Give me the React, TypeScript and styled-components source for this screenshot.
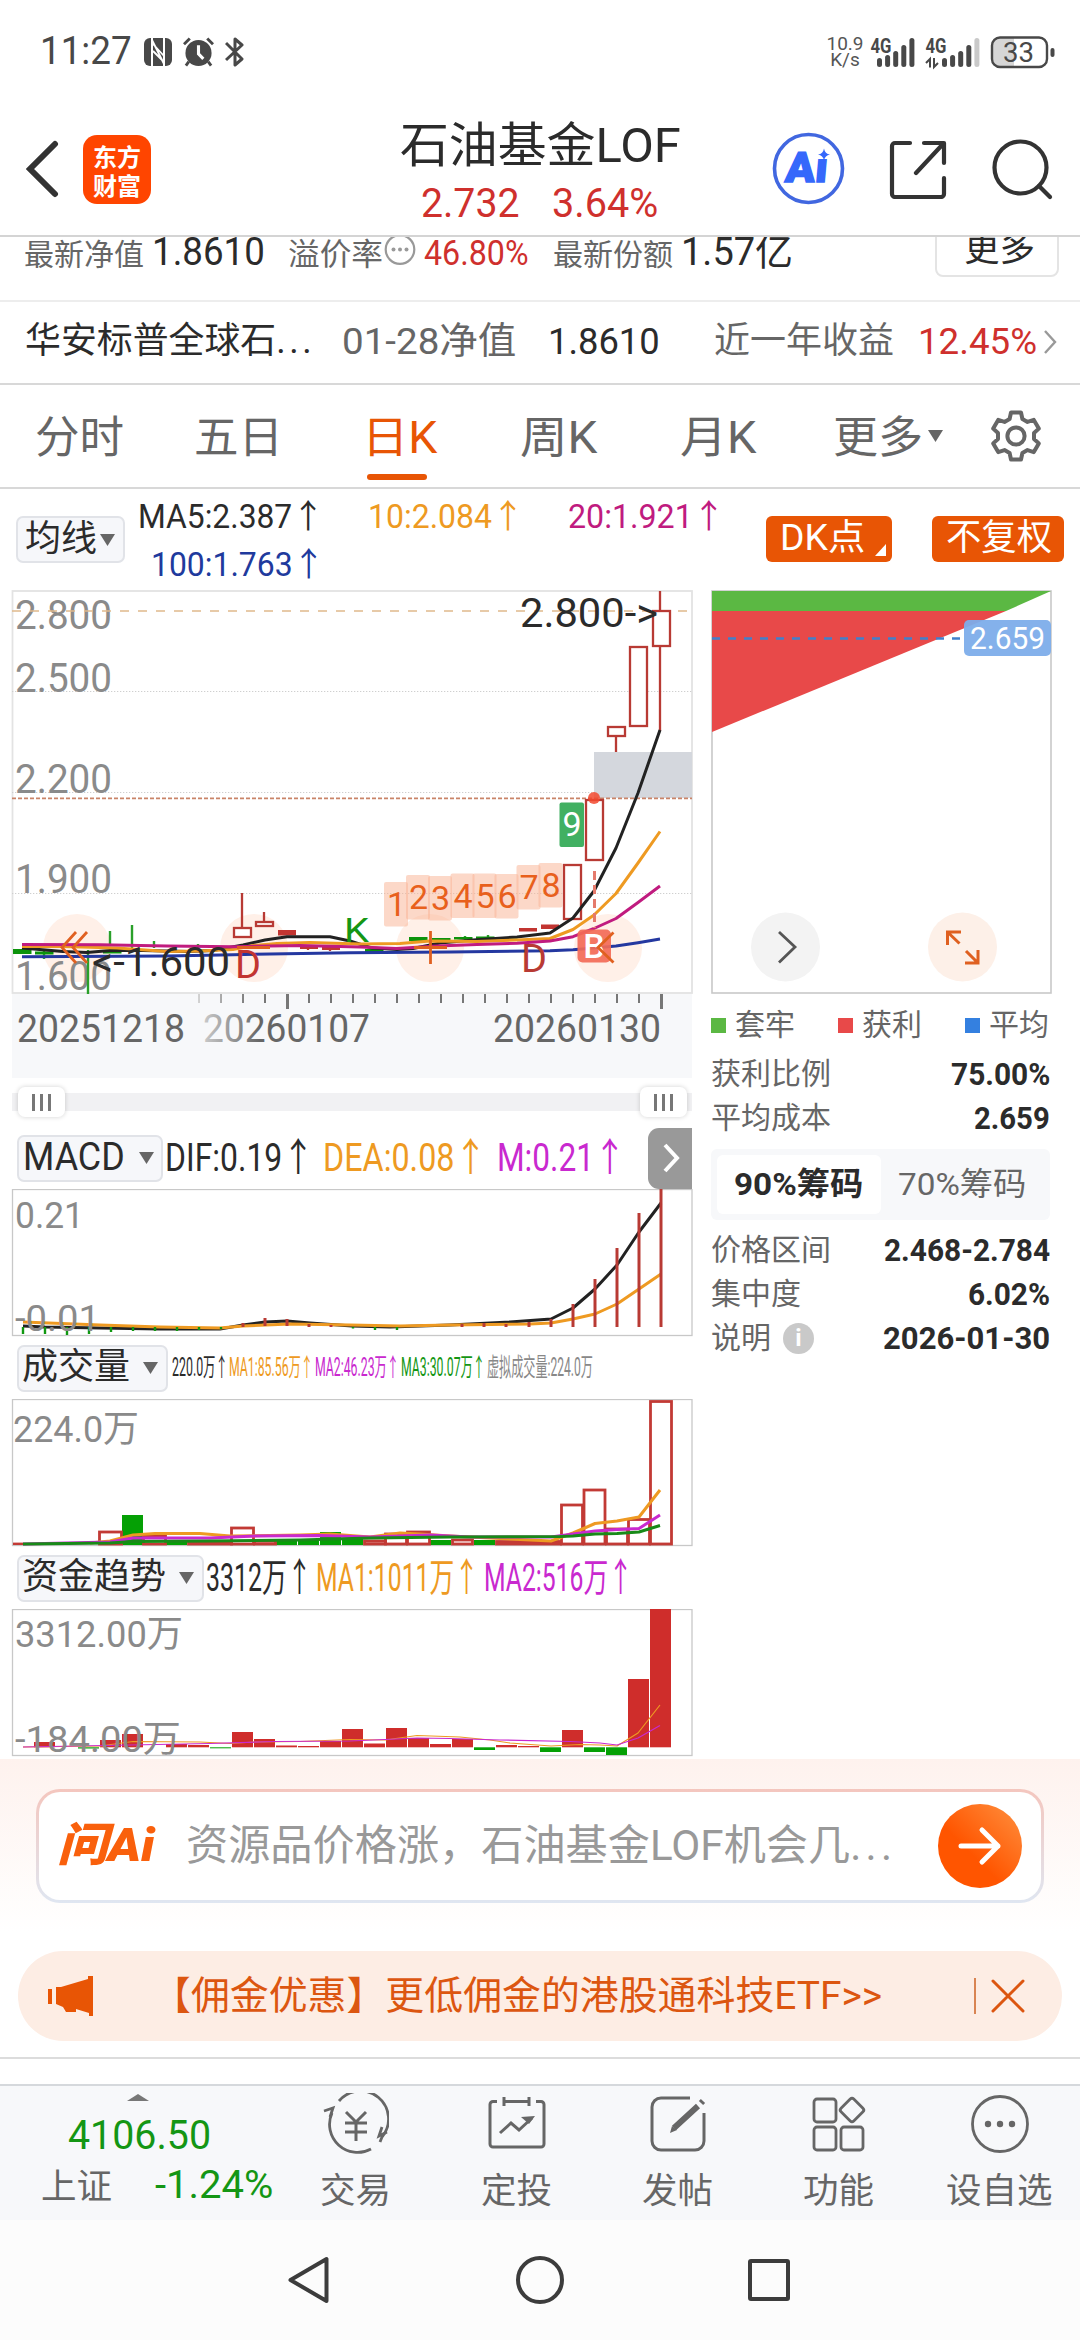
import React, { useLayoutEffect, useRef, useState } from 'react';
import styled, { createGlobalStyle } from 'styled-components';

const FONT = `Roboto, 'Noto Sans CJK SC', sans-serif`;
const INK = '#2b2b2b';
const GREY = '#666';
const RED = '#cf302d';
const ORANGE = '#e85505';
const AMBER = '#ee9a22';
const PURPLE = '#c929cf';
const CANDLE = '#b83a34';
const GREEN = '#149614';

const Global = createGlobalStyle`
  html, body { margin: 0; padding: 0; background: #fff; }
  body { font-family: ${FONT}; color: ${INK}; width: 1080px; overflow: hidden; }
  * { box-sizing: border-box; }
  svg { display: block; flex: none; }
`;

/* ---------- text fitted to a column width ---------- */

type LabelProps = { w: number; size: number; ml?: number; color?: string; weight?: number; italic?: boolean; children: React.ReactNode };

const Slot = styled.span<{ $w: number; $ml: number; $size: number; $color: string; $weight: number; $italic: boolean }>`
  display: block;
  flex: none;
  width: ${p => p.$w}px;
  margin-left: ${p => p.$ml}px;
  font-size: ${p => p.$size}px;
  font-weight: ${p => p.$weight};
  font-style: ${p => (p.$italic ? 'italic' : 'normal')};
  line-height: 1.2;
  color: ${p => p.$color};
  white-space: nowrap;
`;
const Glyphs = styled.span`
  display: inline-block;
  white-space: nowrap;
  transform-origin: 0 50%;
`;
const Dots = styled.span`
  letter-spacing: 0.1em;
`;

function Label({ w, size, ml = 0, color = INK, weight = 400, italic = false, children }: LabelProps) {
  const ref = useRef<HTMLSpanElement>(null);
  const [k, setK] = useState(1);
  useLayoutEffect(() => {
    if (ref.current) setK(w / ref.current.offsetWidth);
  }, [w, size]);
  return (
    <Slot $w={w} $ml={ml} $size={size} $color={color} $weight={weight} $italic={italic}>
      <Glyphs ref={ref} style={{ transform: `scaleX(${k})` }}>{children}</Glyphs>
    </Slot>
  );
}

/* ---------- layout parts ---------- */

const Screen = styled.div`
  width: 1080px;
  height: 2340px;
  display: flex;
  flex-direction: column;
  background: #fff;
  overflow: hidden;
`;
const StatusBar = styled.div`
  height: 103px;
  display: flex;
  align-items: center;
  padding-left: 40px;
`;
const StatusIcons = styled.div`
  display: flex;
  align-items: center;
  gap: 11px;
  margin-left: 12px;
`;
const Speed = styled.div`
  margin-left: auto;
  width: 38px;
  text-align: center;
  font-size: 19px;
  line-height: 15.5px;
  color: #555;
`;
const Signals = styled.div`
  width: 216px;
`;
const Header = styled.header`
  height: 134px;
  display: flex;
  align-items: flex-start;
  border-bottom: 2px solid #d4d4d4;
`;
const HeaderIcon = styled.div<{ $ml: number; $mt: number }>`
  margin: ${p => p.$mt}px 0 0 ${p => p.$ml}px;
`;
const AppLogo = styled.div`
  width: 68px;
  height: 69px;
  margin: 32px 0 0 24px;
  padding-top: 6px;
  border-radius: 14px;
  background: #ff4500;
  color: #fff;
  font: 700 24px/29px 'Noto Sans CJK SC', sans-serif;
  text-align: center;
`;
const TitleBlock = styled.div`
  width: 282px;
  margin: 14px 0 0 249px;
`;
const Quote = styled.div`
  display: flex;
  margin: 5px 0 0 22px;
`;
const StatRow = styled.div`
  height: 65px;
  display: flex;
  align-items: flex-start;
  overflow: hidden;
  border-bottom: 2px solid #ededed;
`;
const StatInner = styled.div`
  display: flex;
  align-items: baseline;
  height: 60px;
  margin-top: -7px;
`;
const MoreButton = styled.div`
  width: 124px;
  height: 70px;
  margin: -30px 0 0 142px;
  padding: 19px 0 0 27px;
  border: 2px solid #e4e4e4;
  border-radius: 8px;
`;
const FundRow = styled.div`
  height: 83px;
  display: flex;
  align-items: center;
  padding: 0 0 1px 25px;
  border-bottom: 2px solid #d8d8d8;
`;
const Tabs = styled.nav`
  height: 104px;
  display: flex;
  align-items: center;
  padding-left: 35px;
  border-bottom: 2px solid #d8d8d8;
`;
const Tab = styled.div<{ $ml: number; $active?: boolean }>`
  height: 102px;
  margin-left: ${p => p.$ml}px;
  display: flex;
  flex-direction: column;
  align-items: center;
  padding-top: 27px;
  &::after {
    content: '';
    display: ${p => (p.$active ? 'block' : 'none')};
    width: 60px;
    height: 6px;
    margin: 9px 5px 0 0;
    border-radius: 3px;
    background: ${ORANGE};
  }
`;
const Averages = styled.section`
  height: 101px;
  display: flex;
  padding-left: 16px;
`;
const Picker = styled.div<{ $w: number }>`
  flex: none;
  width: ${p => p.$w}px;
  height: 47px;
  display: flex;
  align-items: center;
  padding-left: 5px;
  border: 2px solid #e1e3e8;
  border-radius: 7px;
  background: #f6f7fa;
`;
const AverageLines = styled.div`
  width: 600px;
  margin: -19px 0 0 14px;
`;
const AverageLine = styled.div`
  height: 48px;
  display: flex;
`;
const AverageBody = styled.div`
  display: flex;
  padding-top: 27px;
`;
const Tag = styled.div<{ $w: number; $ml: number }>`
  flex: none;
  width: ${p => p.$w}px;
  height: 46px;
  margin-left: ${p => p.$ml}px;
  padding-left: 14px;
  display: flex;
  align-items: center;
  border-radius: 6px;
  background: ${ORANGE};
`;
const Charts = styled.main`
  height: 1169px;
  display: flex;
`;
const Left = styled.div`
  width: 700px;
  flex: none;
`;
const Side = styled.aside`
  width: 339px;
  margin-left: 11px;
`;
const SliderRow = styled.div`
  height: 49px;
  padding: 9px 0 0 12px;
`;
const Track = styled.div`
  width: 680px;
  height: 30px;
  display: flex;
  justify-content: space-between;
  padding: 0 5px 0 6px;
  background: linear-gradient(#f1f1f3, #f1f1f3) 0 6px / 100% 18px no-repeat;
`;
const Handle = styled.div`
  width: 47px;
  height: 30px;
  display: flex;
  align-items: center;
  justify-content: center;
  gap: 5px;
  border-radius: 7px;
  background: #fff;
  box-shadow: 0 0 5px rgba(0, 0, 0, 0.18);
`;
const Grip = styled.i`
  width: 3px;
  height: 17px;
  background: #777;
`;
const IndicatorRow = styled.div`
  height: 62px;
  display: flex;
  align-items: center;
  padding-left: 17px;
`;
const NextButton = styled.div`
  width: 44px;
  height: 61px;
  margin-left: auto;
  margin-right: 8px;
  display: flex;
  align-items: center;
  justify-content: center;
  border-radius: 11px 0 0 11px;
  background: #999;
`;
const Legend = styled.div`
  height: 49px;
  margin-top: 7px;
  padding-bottom: 1px;
  display: flex;
  align-items: center;
`;
const Swatch = styled.i<{ $c: string; $ml?: number }>`
  width: 15px;
  height: 15px;
  margin: 0 9px 0 ${p => p.$ml ?? 0}px;
  background: ${p => p.$c};
`;
const Fact = styled.div`
  height: 44px;
  display: flex;
  align-items: center;
  justify-content: space-between;
`;
const Facts = styled.div`
  padding-top: 2px;
`;
const FactName = styled.div`
  display: flex;
  align-items: center;
  gap: 12px;
`;
const InfoDot = styled.i`
  width: 31px;
  height: 31px;
  border-radius: 50%;
  background: #c9c9c9;
  color: #fff;
  text-align: center;
  font: 700 24px/31px ${FONT};
`;
const Segments = styled.div`
  height: 71px;
  margin: 9px 0 8px;
  padding: 6px;
  display: flex;
  border-radius: 6px;
  background: #f7f8fa;
`;
const Segment = styled.div<{ $active?: boolean }>`
  width: 164px;
  display: flex;
  align-items: center;
  justify-content: center;
  border-radius: 6px;
  background: ${p => (p.$active ? '#fff' : 'transparent')};
`;
const AskArea = styled.section`
  height: 192px;
  padding: 30px 36px 0;
  background: linear-gradient(#fef2ee, #fff 90%);
`;
const AskBox = styled.div`
  height: 114px;
  display: flex;
  align-items: center;
  padding-left: 18px;
  border: 3px solid transparent;
  border-radius: 24px;
  background: linear-gradient(#fff, #fff) padding-box, linear-gradient(#f4c6be, #dfe6f1) border-box;
`;
const GoButton = styled.div`
  width: 84px;
  height: 84px;
  margin-left: 42px;
  display: flex;
  align-items: center;
  justify-content: center;
  border-radius: 50%;
  background: linear-gradient(45deg, #ff5500 40%, #ff9140);
`;
const Promo = styled.section`
  width: 1044px;
  height: 90px;
  margin: 0 18px;
  padding-left: 30px;
  display: flex;
  align-items: center;
  border-radius: 45px;
  background: #fdede4;
`;
const PromoRule = styled.i`
  width: 2px;
  height: 36px;
  margin: 0 15px 0 92px;
  background: #d98452;
`;
const Gap = styled.div`
  height: 43px;
  padding-top: 16px;
  &::before {
    content: '';
    display: block;
    height: 2px;
    background: #dcdcdc;
  }
`;
const BottomBar = styled.footer`
  height: 136px;
  display: flex;
  border-top: 2px solid #d5d8dc;
  background: #f7f8fa;
`;
const IndexBlock = styled.div`
  width: 275px;
  display: flex;
  flex-direction: column;
`;
const IndexLine = styled.div<{ $h: number }>`
  display: flex;
  align-items: flex-end;
  height: ${p => p.$h}px;
`;
const Action = styled.div`
  width: 161px;
  display: flex;
  flex-direction: column;
  align-items: center;
  padding-top: 7px;
  gap: 15px;
`;
const SystemNav = styled.div`
  height: 120px;
  display: flex;
  align-items: center;
  padding-left: 286px;
  background: #fcfcfc;
`;

/* ---------- small drawings ---------- */

const Caret = ({ lead = 0 }: { lead?: number }) => (
  <svg width={lead + 16} height="12" viewBox={`${-lead} 0 ${lead + 16} 12`}>
    <path d="M0 0H15L7.5 12Z" fill="#666" />
  </svg>
);

const Gear = () => {
  const pts: string[] = [];
  for (let i = 0; i < 6; i++) {
    const a = (i * 60 - 90) * (Math.PI / 180);
    [[-0.36, 18.2], [-0.21, 24], [0.21, 24], [0.36, 18.2]].forEach(([d, r]) =>
      pts.push(`${(26 + r * Math.cos(a + d)).toFixed(1)},${(26 + r * Math.sin(a + d)).toFixed(1)}`));
  }
  return (
    <svg width="52" height="52" viewBox="0 0 52 52" fill="none" stroke="#666" strokeWidth="4" strokeLinejoin="round">
      <polygon points={pts.join(' ')} />
      <circle cx="26" cy="26" r="8.6" />
    </svg>
  );
};

const SignalGroup = () => (
  <svg width="216" height="36" viewBox="864 32 216 36" fontFamily={FONT} fill="#484848">
    <text x="870.5" y="51" fontSize="21" fontWeight="700" textLength="21" lengthAdjust="spacingAndGlyphs">4G</text>
    <text x="925.5" y="51" fontSize="21" fontWeight="700" textLength="21" lengthAdjust="spacingAndGlyphs">4G</text>
    {[9, 12, 16, 22, 29].map((h, i) => <rect key={i} x={877 + i * 8.1} y={65 - h} width="5" height={h} rx="2.5" />)}
    {[9, 12, 16, 22, 29].map((h, i) => <rect key={i} x={942 + i * 8.1} y={65 - h} width="5" height={h} rx="2.5" fill={i === 4 ? '#c9c9c9' : undefined} />)}
    <path d="M926 61L930 57V65.500M934 56V65L938 61" fill="none" stroke="#484848" strokeWidth="2" />
    <path d="M1000 36h14v28h-14a7 7 0 0 1-7-7V43a7 7 0 0 1 7-7z" fill="#d6d6d6" />
    <rect x="992" y="35.5" width="55" height="29.5" rx="8" fill="none" stroke="#484848" strokeWidth="2.4" />
    <rect x="1050.5" y="46" width="4" height="9" rx="2" />
    <text x="1003" y="60" fontSize="28" textLength="31" lengthAdjust="spacingAndGlyphs">33</text>
  </svg>
);

const Num = ({ x, y, w, size = 40, fill = '#8a8a8a', weight = 400, children }: { x: number; y: number; w: number; size?: number; fill?: string; weight?: number; children: string }) => (
  <text x={x} y={y} fontSize={size} fill={fill} fontWeight={weight} textLength={w} lengthAdjust="spacingAndGlyphs">{children}</text>
);

const Line = ({ pts, c, w = 3 }: { pts: string; c: string; w?: number }) => (
  <polyline points={pts} fill="none" stroke={c} strokeWidth={w} strokeLinejoin="round" />
);

/* ---------- candlestick chart ---------- */

const hollow = [[653, 611, 646], [630, 647, 726], [608, 727, 736], [586, 800, 860], [564, 865, 919], [234, 928, 937], [256, 922, 926]];
const redWicks = [[660, 591, 611], [660, 646, 731], [616, 736, 752], [242, 893, 927], [264, 912, 921], [308, 945, 950], [330, 946, 951]];
const redSolid = [[541, 924.5, 4.5], [519, 928, 3.5], [278, 930, 5.5], [300, 946.5, 2.5], [322, 947, 3]];
const greenSolid = [[13, 949, 5], [35, 951.5, 3], [409, 937, 4], [432, 938, 2.5], [454, 937, 2.5], [476, 936.5, 2.5], [499, 937, 1.5], [365, 949, 3], [103, 951, 2.5]];
const greenWicks = [[44, 950, 959], [88, 950, 994], [110, 931, 944], [132, 925, 948], [154, 941, 948], [198, 944, 948], [465, 936, 941], [488, 935, 940]];
const counts = [[384, 882], [406, 875], [428, 876], [450.5, 873.5], [472.5, 873.5], [494.5, 874], [516.5, 865], [538.5, 863]];

const KChart = () => (
  <svg width="700" height="488" viewBox="0 590 700 488" fontFamily={FONT}>
    <defs>
      <linearGradient id="fade" gradientUnits="userSpaceOnUse" x1="195" x2="260" y1="0" y2="0">
        <stop offset="0" stopColor="#d8d8d8" /><stop offset="1" stopColor="#666" />
      </linearGradient>
    </defs>
    <rect x="12" y="994" width="680" height="84" fill="#f7f8fa" />
    <rect x="12.5" y="591" width="679.5" height="402" fill="#fff" stroke="#e3e3e3" strokeWidth="1.8" />
    {[691.5, 792.5, 893.5].map(y => <path key={y} d={`M12 ${y}H692`} stroke="#cfcfcf" strokeWidth="1.2" strokeDasharray="1.3 1.7" />)}
    <Num x={15} y={629} w={97}>2.800</Num>
    <Num x={15} y={692} w={97}>2.500</Num>
    <Num x={15} y={793} w={97}>2.200</Num>
    <Num x={15} y={893} w={97}>1.900</Num>
    {[77, 254, 430, 608].map(x => <circle key={x} cx={x} cy="948" r="34" fill="#fff0e8" />)}
    <Num x={15} y={990} w={97}>1.600</Num>
    <path d="M12 611H692" stroke="#dfb98c" strokeWidth="1.6" strokeDasharray="9 9" />
    <rect x="594" y="752" width="98" height="46" fill="#d4d7dd" />
    <path d="M12 798.4H692" stroke="#c98468" strokeWidth="1.6" strokeDasharray="4 2" />
    <g stroke="#2aa02a" strokeWidth="2.4">{greenWicks.map(([x, a, b], i) => <path key={i} d={`M${x} ${a}V${b}`} />)}</g>
    {greenSolid.map(([x, y, h], i) => <rect key={i} x={x} y={y} width="18.5" height={h} fill="#0c930c" />)}
    {hollow.map(([x, a, b], i) => <rect key={i} x={x} y={a} width="17" height={b - a} fill="#fff" stroke={CANDLE} strokeWidth="2.3" />)}
    <g stroke={CANDLE} strokeWidth="2.3">{redWicks.map(([x, a, b], i) => <path key={i} d={`M${x} ${a}V${b}`} />)}</g>
    {redSolid.map(([x, y, h], i) => <rect key={i} x={x} y={y} width="18" height={h} fill="#c23531" />)}
    {counts.map(([x, y], i) => (
      <g key={i}>
        <rect x={x} y={y} width="24" height="44.5" rx="2" fill="#f9b496" fillOpacity="0.52" />
        <text x={x + 12.5} y={y + 34} fontSize="34" fill="#e8601c" textAnchor="middle">{i + 1}</text>
      </g>
    ))}
    <rect x="559.5" y="802.5" width="24.5" height="44.5" rx="2" fill="#41b062" />
    <text x="572" y="836" fontSize="34" fill="#fff" textAnchor="middle">9</text>
    <Line c="#222" pts="22,948 63,951.5 87,952.5 110,950.5 143,950.5 187,951.5 213,950.5 243,945 265,940 287,936.7 330,936.7 350,941 372,948 397,949.5 413,948.5 440,943 473,940 517,937 550,933 573,918 594,891 616,848 638,793 660,730" />
    <Line c={AMBER} pts="22,946.5 63,946.5 117,948 167,951.5 200,951 233,949.5 253,945.5 277,943.5 310,942.5 360,944 400,943.5 430,941 477,941.5 517,940 550,938.5 573,929.5 594,915 616,893.5 638,863 660,831.5" />
    <Line c="#c01b7f" pts="22,944.5 100,944.7 167,946 233,946.7 300,945.5 360,947 397,948.5 437,946 477,944.5 517,943.3 550,941 573,936.7 594,928.5 616,918.5 638,902.5 660,886" />
    <Line c="#2438a0" pts="22,956.7 167,956 233,954.7 350,952.7 450,952 550,950.7 573,949.7 594,948 616,946 638,942.7 660,939" />
    <path d="M594.5 871V928" stroke="#e57a6c" strokeWidth="3" strokeDasharray="9 5" />
    <circle cx="594" cy="798" r="6" fill="#f2492f" fillOpacity="0.85" />
    <rect x="577.5" y="929.5" width="33.5" height="33" rx="5" fill="#f36b57" fillOpacity="0.92" />
    <text x="594" y="957.5" fontSize="34" fontWeight="500" fill="#fff" textAnchor="middle">B</text>
    <g fill="none" stroke="#e06020" strokeWidth="2.8">
      <path d="M76 932L62 947.5L76 963M87 932L73 947.5L87 963M237 947.5H270M414 947.5H447M430.5 931V964M613.5 932.5L598 947.5L613.5 962.5" />
    </g>
    <Num x={92} y={976} w={138} fill={INK}>{'<-1.600'}</Num>
    <Num x={520} y={627} w={138} fill={INK}>{'2.800->'}</Num>
    <Num x={235} y={977.5} w={26} size={39} fill="#c23531">D</Num>
    <Num x={521} y={971.5} w={26} size={39} fill={CANDLE}>D</Num>
    <Num x={344} y={942} w={25} size={34} fill={GREEN}>K</Num>
    {Array.from({ length: 22 }, (_, i) => 199 + i * 22).map(x => {
      const major = x === 287 || x === 661;
      return <rect key={x} x={x - 1} y="994" width={major ? 3 : 2} height={major ? 15 : 9} fill={x < 260 ? 'url(#fade)' : '#777'} />;
    })}
    <Num x={17} y={1042} w={168} size={38} fill="#666">20251218</Num>
    <Num x={203} y={1042} w={167} size={38} fill="url(#fade)">20260107</Num>
    <Num x={493} y={1042} w={168} size={38} fill="#666">20260130</Num>
  </svg>
);

/* ---------- indicator charts ---------- */

const Frame = ({ y }: { y: number }) => <rect x="12.5" y={y + 0.5} width="679.5" height="146" fill="#fff" stroke="#c8c8c8" strokeWidth="1.3" />;

const MacdChart = () => (
  <svg width="700" height="148" viewBox="0 1189 700 148" fontFamily={FONT}>
    <Frame y={1189} />
    <Num x={15} y={1228} w={69} size={37}>0.21</Num>
    <Line c="#222" pts="23,1326 45,1327 100,1328 160,1329 220,1329 243,1325 265,1322 287,1321 310,1323 352,1326 390,1327 450,1325 510,1322 551,1319 573,1308 595,1289 617,1265 639,1232 661,1203" />
    <Line c={AMBER} pts="23,1322 100,1325 160,1327 220,1328 243,1326 290,1324 350,1325 400,1326 450,1325 530,1324 551,1323 573,1319 595,1314 617,1304 639,1289 661,1274" />
    <g stroke={CANDLE} strokeWidth="3">
      {[[243, 1323, 1327], [265, 1318, 1326], [287, 1319, 1326], [309, 1324, 1327], [331, 1325, 1327], [462, 1324, 1327], [484, 1323, 1327], [506, 1324, 1327], [529, 1322, 1327], [551, 1319, 1327], [573, 1304, 1327], [595, 1279, 1327], [617, 1248, 1327], [639, 1213, 1327], [661, 1189, 1327]].map(([x, a, b]) => <path key={x} d={`M${x} ${a}V${b}`} />)}
    </g>
    <g stroke="#109810" strokeWidth="2.4">
      {[[23, 1334], [45, 1334], [67, 1335], [89, 1334], [111, 1332], [133, 1331], [155, 1331], [177, 1331], [199, 1330], [221, 1329], [353, 1328.5], [375, 1330], [397, 1330]].map(([x, b]) => <path key={x} d={`M${x} 1327V${b}`} />)}
    </g>
    <Num x={15} y={1331} w={85} size={37}>-0.01</Num>
  </svg>
);

const volRed = [[99, 1532, 23], [143, 1536, 23], [188, 1542, 44], [231, 1528, 23], [254, 1541, 22], [364, 1541, 22], [385, 1534, 22], [407, 1532, 23], [452, 1540, 21], [496, 1541.5, 65], [561, 1505, 22], [583.5, 1490, 22], [606, 1529, 22], [628, 1519.5, 22], [650, 1401.5, 22]];
const volGreen = [[122, 1515], [276, 1541], [298, 1541], [320, 1532], [342, 1539], [430, 1540], [474, 1540], [166, 1541]];

const VolumeChart = () => (
  <svg width="700" height="148" viewBox="0 1399 700 148" fontFamily={FONT}>
    <Frame y={1399} />
    <Num x={13} y={1442} w={126} size={37}>224.0万</Num>
    {volGreen.map(([x, y]) => <rect key={x} x={x} y={y} width="21" height={1545 - y} fill="#05a005" />)}
    {volRed.map(([x, y, w]) => <rect key={x} x={x + 0.5} y={y} width={w - 1} height={1544 - y} fill="none" stroke="#c23a35" strokeWidth="2.8" />)}
    <Line c={AMBER} pts="90,1543 110,1541 133,1535 155,1533.5 200,1533.5 230,1536 300,1535 330,1534 370,1537 400,1533 420,1534 450,1536 510,1539 551,1541 573,1533 595,1523.5 617,1521 639,1517 660,1490" />
    <Line c={PURPLE} pts="23,1544 110,1542 133,1538 210,1538 255,1536 320,1535.5 370,1537 430,1535 470,1537 551,1537 573,1534 595,1531 617,1529.5 639,1528.5 660,1515" />
    <Line c="#188a18" pts="23,1544 110,1543 133,1541.5 210,1541 300,1540 370,1538 450,1537 560,1536.5 573,1536 595,1534 617,1533.5 639,1532 660,1525.5" />
    <path d="M13 1543.8H23" stroke="#c23a35" strokeWidth="2.4" />
  </svg>
);

const flowRed = [[34, 1742], [100, 1740], [122, 1734], [166, 1744], [188, 1745], [232, 1732], [254, 1739], [276, 1745.5], [298, 1746], [320, 1741], [342, 1729], [364, 1743.5], [386, 1728], [408, 1738], [430, 1744], [452, 1739], [496, 1745], [518, 1746], [562, 1730], [628, 1679], [650, 1609]];
const flowGreen = [[78, 1748.5], [210, 1748.3], [474, 1750], [540, 1752], [584, 1752], [606, 1755]];

const FlowChart = () => (
  <svg width="700" height="150" viewBox="0 1609 700 150" fontFamily={FONT}>
    <Frame y={1609} />
    <Num x={15} y={1647} w={168} size={37}>3312.00万</Num>
    {flowRed.map(([x, y]) => <rect key={x} x={x} y={y} width="21" height={1747.3 - y} fill="#cf2d2b" />)}
    {flowGreen.map(([x, b]) => <rect key={x} x={x} y="1747.3" width="21" height={b - 1747.3} fill="#05a005" />)}
    <Line w={1.2} c={AMBER} pts="23,1747 100,1746 133,1741.5 200,1742 230,1743.5 255,1742 300,1741.5 350,1739.5 385,1740 417,1735.5 460,1737 490,1740 510,1743 551,1746 580,1744.5 600,1745 617,1746 638,1733 660,1705" />
    <Line w={1.2} c={PURPLE} pts="23,1747 210,1743.5 275,1741.5 350,1741 385,1739.5 417,1738 450,1738.5 500,1740 570,1741.5 600,1743 617,1745 638,1738 660,1725.5" />
    <Num x={15} y={1752} w={166} size={37}>-184.00万</Num>
  </svg>
);

const ChipChart = () => (
  <svg width="341" height="404" viewBox="710 590 341 404" fontFamily={FONT}>
    <rect x="711" y="591" width="339" height="402" fill="#fff" stroke="#c8c8c8" strokeWidth="1.6" />
    <path d="M711 591H1050L1005 611H711Z" fill="#5bb843" />
    <path d="M711 611H1005L711 732Z" fill="#e84949" />
    <path d="M711 638.5H960" stroke="#4080cc" strokeWidth="2.4" strokeDasharray="8 8" />
    <rect x="963" y="620" width="87" height="36" rx="5" fill="#7dadea" fillOpacity="0.95" />
    <Num x={969} y={649} w={75} size={31} fill="#fff">2.659</Num>
    <circle cx="784.5" cy="947" r="34.5" fill="#f3f3f3" />
    <path d="M778 932L794 947L778 962.5" fill="none" stroke="#555" strokeWidth="2.8" />
    <circle cx="961.5" cy="947" r="34.5" fill="#fdf0e8" />
    <path d="M960 932H946.500V945M947 932.5L958.500 943.500M964 963H977V950M976.500 962.500L965 951" fill="none" stroke="#df6020" strokeWidth="3" />
  </svg>
);

const actions: { name: string; w: number; icon: React.ReactNode }[] = [
  { name: '交易', w: 71, icon: (<><path d="M13 8A28 28 0 0 1 56 44L54 49M45 56A28 28 0 0 1 6 20" strokeWidth="2.8" /><path d="M-2 18L7 15L4 24M61 39L53 43L56 34" strokeWidth="2.8" /><path d="M20 19L30 29L40 19M19 30H41M19 39H41M30 29V48" strokeWidth="3" /></>) },
  { name: '定投', w: 71, icon: (<><path d="M10 8.500H6a3 3 0 0 0-3 3V51a3 3 0 0 0 3 3H54a3 3 0 0 0 3-3V11.500a3 3 0 0 0-3-3H49M17 8.500H43M17 4V13M42 4V13" strokeWidth="3" /><path d="M13 40L24 30L32 37L45 25" strokeWidth="3" /><path d="M34 24L48 23L42 31Z" fill="#666" stroke="none" /></>) },
  { name: '发帖', w: 71, icon: (<><path d="M42 5H13a9 9 0 0 0-9 9V48a9 9 0 0 0 9 9H47a9 9 0 0 0 9-9V20" strokeWidth="3" /><path d="M26 35L50 13M53 10L55 8" strokeWidth="6" /><path d="M22 40L24 33L29 37Z" fill="#666" stroke="none" /></>) },
  { name: '功能', w: 71, icon: (<><g strokeWidth="2.8"><rect x="5" y="6" width="22" height="23" rx="3" /><rect x="5" y="34" width="22" height="23" rx="3" /><rect x="32" y="34" width="22" height="23" rx="3" /><rect x="34" y="8" width="18" height="18" rx="2.500" transform="rotate(45 43 17)" /></g></>) },
  { name: '设自选', w: 107, icon: (<><circle cx="30" cy="31" r="27.500" strokeWidth="2.8" /><g fill="#666" stroke="none"><circle cx="18" cy="31" r="3.200" /><circle cx="30" cy="31" r="3.200" /><circle cx="42" cy="31" r="3.200" /></g></>) },
];

const tabs = [
  { name: '分时', w: 89, ml: 0 },
  { name: '五日', w: 89, ml: 70 },
  { name: '日K', w: 75, ml: 79, active: true },
  { name: '周K', w: 77, ml: 83 },
  { name: '月K', w: 76, ml: 83 },
  { name: '更多', w: 90, ml: 77 },
];

export default function App() {
  return (
    <>
      <Global />
      <Screen>
        <StatusBar>
          <Label w={92} size={38} color="#484848">11:27</Label>
          <StatusIcons>
            <svg width="28" height="28" viewBox="0 0 28 28">
              <rect x="0" y="0" width="28" height="28" rx="6" fill="#484848" />
              <path d="M8 0V28M20 0V28" stroke="#fff" strokeWidth="2" />
              <path d="M8 2L20 26V18L9 6M9 13L19 23" stroke="#fff" strokeWidth="1.800" fill="none" />
            </svg>
            <svg width="31" height="30" viewBox="0 0 32 30">
              <circle cx="16" cy="16" r="13.500" fill="#484848" />
              <path d="M1 7L7 1M31 7L25 1M6 25L3 29M26 25L29 29" stroke="#484848" strokeWidth="3" />
              <path d="M16 8V17L21 22" stroke="#fff" strokeWidth="3.200" fill="none" />
            </svg>
            <svg width="19" height="30" viewBox="1 0 19 30">
              <path d="M2 6L18 22L11 28V2L18 8L2 23" stroke="#484848" strokeWidth="3" fill="none" strokeLinejoin="round" />
            </svg>
          </StatusIcons>
          <Speed>10.9<br />K/s</Speed>
          <Signals><SignalGroup /></Signals>
        </StatusBar>

        <Header>
          <HeaderIcon $ml={26} $mt={37}>
            <svg width="33" height="58" viewBox="0 0 33 58" fill="none" stroke="#333" strokeWidth="6" strokeLinecap="round"><path d="M29 4L4 29L29 54" strokeLinejoin="miter" /></svg>
          </HeaderIcon>
          <AppLogo>东方<br />财富</AppLogo>
          <TitleBlock>
            <Label w={281} size={48}>石油基金LOF</Label>
            <Quote>
              <Label w={98} size={40} ml={-1} color={RED}>2.732</Label>
              <Label w={106} size={40} ml={33} color={RED}>3.64%</Label>
            </Quote>
          </TitleBlock>
          <HeaderIcon $ml={90} $mt={29}>
            <svg width="74" height="74" viewBox="0 0 74 74" fontFamily={FONT}>
              <circle cx="36.500" cy="36.500" r="34" fill="none" stroke="#4167e0" strokeWidth="3.600" />
              <text x="14" y="50" fontSize="42" fontWeight="900" fill="#3568fb" stroke="#3568fb" strokeWidth="1.500" textLength="42" lengthAdjust="spacingAndGlyphs" transform="skewX(-5) translate(3 0)">Aı</text>
              <path d="M52 16.500Q53 22 58 22.500Q53 23.500 52 28.500Q51 23.500 46 22.500Q51 22 52 16.500Z" fill="#3568fb" />
            </svg>
          </HeaderIcon>
          <HeaderIcon $ml={42} $mt={36}>
            <svg width="60" height="60" viewBox="0 0 60 60" fill="none" stroke="#333" strokeWidth="4.200" strokeLinecap="round" strokeLinejoin="round">
              <path d="M22 4H7a3 3 0 0 0-3 3V55a3 3 0 0 0 3 3H53a3 3 0 0 0 3-3V39M36 4H56V24M55 5L28 34" />
            </svg>
          </HeaderIcon>
          <HeaderIcon $ml={43} $mt={36}>
            <svg width="64" height="64" viewBox="0 0 64 64" fill="none" stroke="#333" strokeWidth="4.200" strokeLinecap="round">
              <circle cx="29.500" cy="28.500" r="26" /><path d="M48 47L59 58" />
            </svg>
          </HeaderIcon>
        </Header>

        <StatRow>
          <StatInner>
            <Label w={120} size={30} ml={24} color={GREY}>最新净值</Label>
            <Label w={113} size={38} ml={8}>1.8610</Label>
            <Label w={95} size={31} ml={23} color={GREY}>溢价率</Label>
            <svg width="33" height="31" viewBox="0 0 33 31" fill="none" stroke="#999" strokeWidth="2.200">
              <circle cx="17" cy="15.500" r="14.300" />
              <g fill="#999" stroke="none"><circle cx="10.500" cy="15.500" r="2" /><circle cx="17" cy="15.500" r="2" /><circle cx="23.500" cy="15.500" r="2" /></g>
            </svg>
            <Label w={105} size={35} ml={8} color={RED}>46.80%</Label>
            <Label w={120} size={30} ml={24} color={GREY}>最新份额</Label>
            <Label w={112} size={38} ml={8}>1.57亿</Label>
          </StatInner>
          <MoreButton><Label w={71} size={36}>更多</Label></MoreButton>
        </StatRow>

        <FundRow>
          <Label w={290} size={36}>华安标普全球石<Dots>...</Dots></Label>
          <Label w={174} size={37} ml={27} color={GREY}>01-28净值</Label>
          <Label w={112} size={37} ml={32}>1.8610</Label>
          <Label w={180} size={36} ml={54} color={GREY}>近一年收益</Label>
          <Label w={119} size={37} ml={24} color={RED}>12.45%</Label>
          <svg width="20" height="26" viewBox="0 0 20 26" fill="none" stroke="#999" strokeWidth="2.400"><path d="M8 2L18 13L8 24" /></svg>
        </FundRow>

        <Tabs>
          {tabs.map(t => (
            <Tab key={t.name} $ml={t.ml} $active={t.active}>
              <Label w={t.w} size={44.5} color={t.active ? ORANGE : GREY}>{t.name}</Label>
            </Tab>
          ))}
          <Caret lead={5} />
          <HeaderIcon $ml={46} $mt={0}><Gear /></HeaderIcon>
        </Tabs>

        <Averages>
          <AverageBody>
            <Picker $w={109}>
              <Label w={72} size={36} ml={2}>均线</Label>
              <Caret lead={3} />
            </Picker>
            <AverageLines>
              <AverageLine>
                <Label w={186} size={33} ml={-1}>MA5:2.387↑</Label>
                <Label w={156} size={33} ml={44} color={AMBER}>10:2.084↑</Label>
                <Label w={157} size={33} ml={44} color="#c01b7f">20:1.921↑</Label>
              </AverageLine>
              <AverageLine>
                <Label w={174} size={33} ml={12} color="#203a9d">100:1.763↑</Label>
              </AverageLine>
            </AverageLines>
            <Tag $w={126} $ml={27}>
              <Label w={85} size={36} color="#fff">DK点</Label>
              <svg width="25" height="46" viewBox="0 0 25 46"><path d="M10 40H21V28Z" fill="#fff" /></svg>
            </Tag>
            <Tag $w={132} $ml={40}><Label w={106} size={36} color="#fff">不复权</Label></Tag>
          </AverageBody>
        </Averages>

        <Charts>
          <Left>
            <KChart />
            <SliderRow>
              <Track>
                <Handle><Grip /><Grip /><Grip /></Handle>
                <Handle><Grip /><Grip /><Grip /></Handle>
              </Track>
            </SliderRow>
            <IndicatorRow>
              <Picker $w={146}>
                <Label w={102} size={38} ml={-1}>MACD</Label>
                <Caret lead={14} />
              </Picker>
              <Label w={149} size={39} ml={2}>DIF:0.19↑</Label>
              <Label w={164} size={39} ml={9} color={AMBER}>DEA:0.08↑</Label>
              <Label w={129} size={39} ml={10} color={PURPLE}>M:0.21↑</Label>
              <NextButton><svg width="20" height="30" viewBox="0 0 20 30" fill="none" stroke="#fff" strokeWidth="4"><path d="M5 2L17 15L5 28" /></svg></NextButton>
            </IndicatorRow>
            <MacdChart />
            <IndicatorRow>
              <Picker $w={151}>
                <Label w={108} size={36} ml={-2}>成交量</Label>
                <Caret lead={13} />
              </Picker>
              <Label w={56} size={25} ml={4}>220.0万↑</Label>
              <Label w={84} size={25} ml={1} color={AMBER}>MA1:85.56万↑</Label>
              <Label w={84} size={25} ml={2} color={PURPLE}>MA2:46.23万↑</Label>
              <Label w={84} size={25} ml={2} color={GREEN}>MA3:30.07万↑</Label>
              <Label w={106} size={25} ml={2} color="#888">虚拟成交量:224.0万</Label>
            </IndicatorRow>
            <VolumeChart />
            <IndicatorRow>
              <Picker $w={187}>
                <Label w={144} size={36} ml={-2}>资金趋势</Label>
                <Caret lead={13} />
              </Picker>
              <Label w={106} size={39} ml={2}>3312万↑</Label>
              <Label w={163} size={39} ml={4} color={AMBER}>MA1:1011万↑</Label>
              <Label w={149} size={39} ml={5} color={PURPLE}>MA2:516万↑</Label>
            </IndicatorRow>
            <FlowChart />
          </Left>
          <Side>
            <ChipChart />
            <Legend>
              <Swatch $c="#5bb843" /><Label w={60} size={30} color={GREY}>套牢</Label>
              <Swatch $c="#e84949" $ml={43} /><Label w={60} size={30} color={GREY}>获利</Label>
              <Swatch $c="#3480e0" $ml={43} /><Label w={60} size={30} color={GREY}>平均</Label>
            </Legend>
            <Facts>
              <Fact><Label w={120} size={30} color={GREY}>获利比例</Label><Label w={99} size={32} weight={700}>75.00%</Label></Fact>
              <Fact><Label w={120} size={30} color={GREY}>平均成本</Label><Label w={76} size={32} weight={700}>2.659</Label></Fact>
            </Facts>
            <Segments>
              <Segment $active><Label w={129} size={32} weight={700}>90%筹码</Label></Segment>
              <Segment><Label w={128} size={32} color={GREY}>70%筹码</Label></Segment>
            </Segments>
            <Fact><Label w={120} size={30} color={GREY}>价格区间</Label><Label w={166} size={32} weight={700}>2.468-2.784</Label></Fact>
            <Fact><Label w={90} size={30} color={GREY}>集中度</Label><Label w={82} size={32} weight={700}>6.02%</Label></Fact>
            <Fact>
              <FactName><Label w={60} size={30} color={GREY}>说明</Label><InfoDot>i</InfoDot></FactName>
              <Label w={167} size={32} weight={700}>2026-01-30</Label>
            </Fact>
          </Side>
        </Charts>

        <AskArea>
          <AskBox>
            <Label w={98} size={46} weight={900} italic color="#f9600c">问Ai</Label>
            <Label w={710} size={42} ml={31} color="#999">资源品价格涨，石油基金LOF机会几<Dots>...</Dots></Label>
            <GoButton>
              <svg width="44" height="40" viewBox="0 0 44 40" fill="none" stroke="#fff" strokeWidth="5" strokeLinecap="round" strokeLinejoin="round"><path d="M3 20H40M24 4L40 20L24 36" /></svg>
            </GoButton>
          </AskBox>
        </AskArea>

        <Promo>
          <svg width="46" height="40" viewBox="0 0 46 40" fill={ORANGE}>
            <rect x="0" y="13" width="4" height="15" />
            <path d="M8 11H13L40 3V0H45V40H41V37L28 33V36H18L15 31L8 28Z" />
          </svg>
          <Label w={730} size={39} ml={58} color="#dc5610">【佣金优惠】更低佣金的港股通科技ETF&gt;&gt;</Label>
          <PromoRule />
          <svg width="34" height="34" viewBox="0 0 34 34" stroke="#dc5610" strokeWidth="3" strokeLinecap="round"><path d="M2 2L32 32M32 2L2 32" /></svg>
        </Promo>
        <Gap />

        <BottomBar>
          <IndexBlock>
            <svg width="275" height="16" viewBox="0 0 275 16"><path d="M127 15L138 8L149 15Z" fill="#777" /></svg>
            <IndexLine $h={58}><Label w={143} size={41} ml={68} color={GREEN}>4106.50</Label></IndexLine>
            <IndexLine $h={49}>
              <Label w={71} size={35.5} ml={41} color={GREY}>上证</Label>
              <Label w={118} size={38} ml={43} color={GREEN}>-1.24%</Label>
            </IndexLine>
          </IndexBlock>
          {actions.map(a => (
            <Action key={a.name}>
              <svg width="66" height="62" viewBox="-3 0 66 62" fill="none" stroke="#666">{a.icon}</svg>
              <Label w={a.w} size={35.5} color={GREY}>{a.name}</Label>
            </Action>
          ))}
        </BottomBar>

        <SystemNav>
          <svg width="510" height="60" viewBox="286 2250 510 60" fill="none" stroke="#3c3c3c" strokeWidth="4" strokeLinejoin="round">
            <path d="M290.500 2280L326.500 2259V2301Z" />
            <circle cx="540" cy="2280" r="22" />
            <rect x="750" y="2261" width="38" height="38" rx="1" />
          </svg>
        </SystemNav>
      </Screen>
    </>
  );
}
